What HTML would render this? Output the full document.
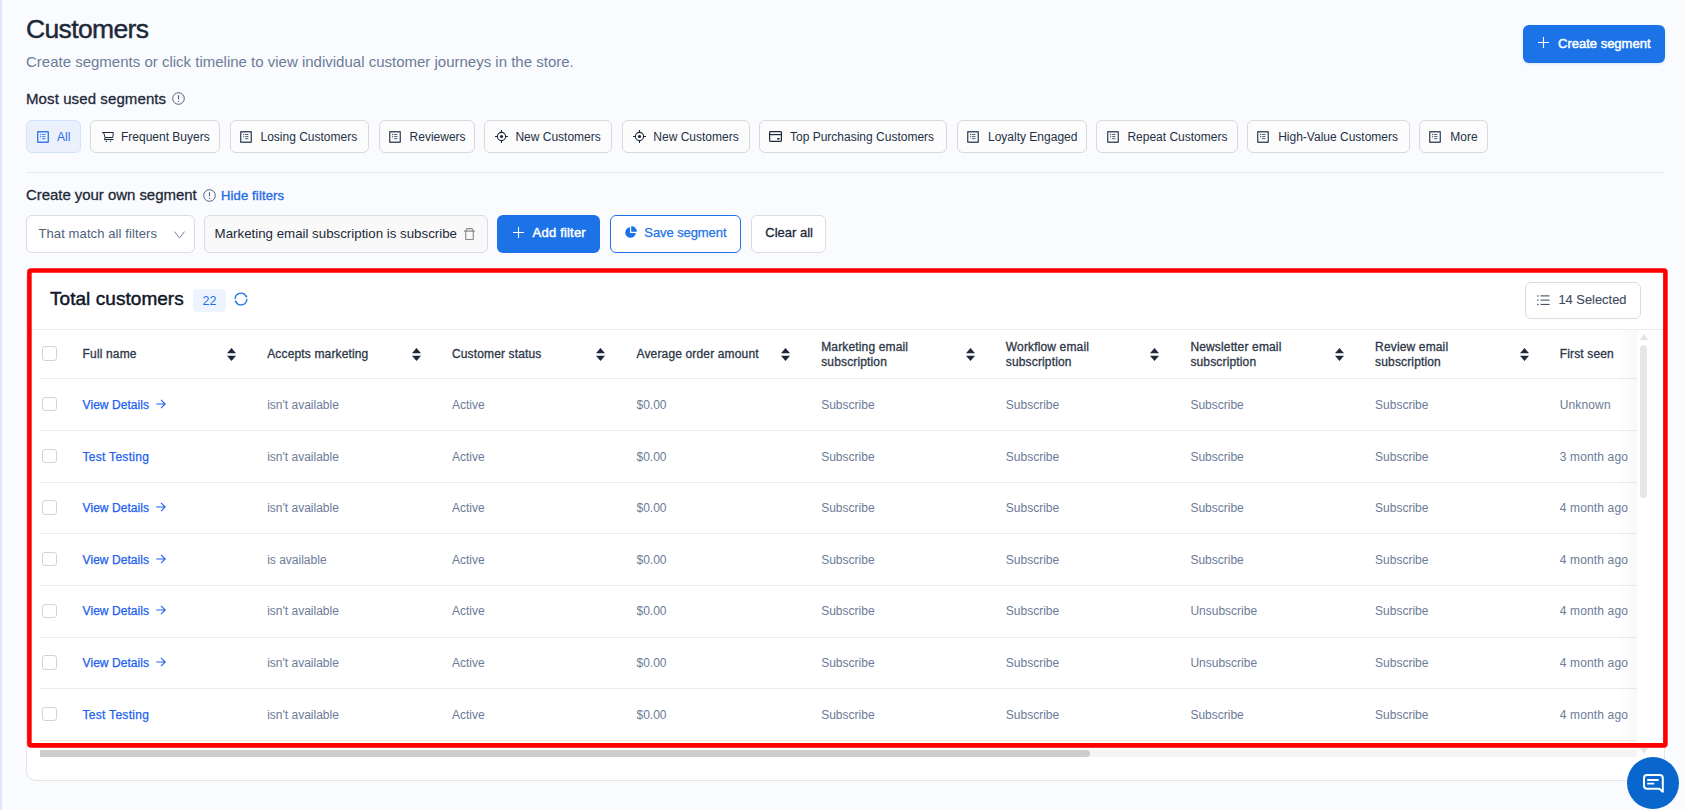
<!DOCTYPE html>
<html><head><meta charset="utf-8"><title>Customers</title>
<style>
html,body{margin:0;padding:0;}
body{width:1685px;height:810px;overflow:hidden;position:relative;background:#fafbfe;font-family:"Liberation Sans", sans-serif;}
.abs{position:absolute;white-space:nowrap;}
svg{display:block;}
.lb{position:absolute;left:0;top:0;width:2px;height:810px;background:#e3e6fa;}
.btn-blue{background:#1c73e8;}
.chip{border:1px solid #d8d9de;border-radius:6px;box-sizing:border-box;background:#fcfcfd;}
.chip.active{background:#eaf1fd;border-color:#d3e2fb;}
.chiptxt{top:1px;line-height:31px;font-size:12px;letter-spacing:0px;color:#243044;}
.chip.active .chiptxt{color:#2a6be8;}
.field{border:1px solid #dcdcdf;border-radius:6px;box-sizing:border-box;}
.th{font-size:12px;color:#2d3748;letter-spacing:0.15px;-webkit-text-stroke:0.3px #2d3748;line-height:15px;}
.td{font-size:12px;color:#6b7b98;line-height:20px;}
.link{font-size:12px;color:#2160f0;-webkit-text-stroke:0.25px #2160f0;letter-spacing:0.05px}
.cb{width:14.4px;height:14.4px;border:1px solid #d0d5dd;border-radius:3px;box-sizing:border-box;background:#fff;}
</style></head>
<body>
<div class="lb"></div>
<div class="abs" style="left:26px;top:13px;font-size:26.5px;color:#1d2939;letter-spacing:-0.65px;-webkit-text-stroke:0.45px #1d2939;line-height:32px">Customers</div>
<div class="abs" style="left:26px;top:52px;font-size:15px;color:#6b7b98;line-height:20px">Create segments or click timeline to view individual customer journeys in the store.</div>
<div class="abs btn-blue" style="left:1523px;top:25px;width:142px;height:38px;border-radius:6px;box-shadow:0 1px 3px rgba(28,115,232,0.18)"><span class="abs" style="left:15px;top:12px"><svg width="11" height="11" viewBox="0 0 11 11"><path d="M5.5 0V11M0 5.5H11" stroke="#fff" stroke-width="1.1"/></svg></span><span class="abs" style="left:35px;top:0;line-height:38px;font-size:13px;color:#fff;-webkit-text-stroke:0.45px #fff">Create segment</span></div>
<div class="abs" style="left:26px;top:89px;font-size:15px;color:#1d2939;letter-spacing:0.1px;-webkit-text-stroke:0.3px #1d2939;line-height:20px">Most used segments</div>
<div class="abs" style="left:172px;top:92px"><svg width="13" height="13" viewBox="0 0 13 13"><circle cx="6.5" cy="6.5" r="5.8" fill="none" stroke="#52627e" stroke-width="1"/><path d="M6.5 3.2V7.4" stroke="#52627e" stroke-width="1.1"/><circle cx="6.5" cy="9.3" r="0.65" fill="#52627e"/></svg></div>
<div class="abs chip active" style="left:26px;top:120px;width:55.3px;height:33px"><span class="abs" style="left:9.9px;top:10px;line-height:0"><svg width="12" height="12" viewBox="0 0 12 12"><rect x="0.7" y="0.7" width="10.6" height="10.6" rx="0.35" fill="none" stroke="#3b7be9" stroke-width="1.4"/><circle cx="3.6" cy="3.5" r="0.65" fill="#3b7be9"/><circle cx="3.6" cy="5.6" r="0.65" fill="#3b7be9"/><circle cx="3.6" cy="7.7" r="0.5" fill="#3b7be9" opacity=".35"/><path d="M5.1 3.5H8.4M5.1 5.6H8.4M5.1 7.7H8.4" stroke="#3b7be9" stroke-width="0.95"/></svg></span><span class="abs chiptxt" style="left:30px">All</span></div>
<div class="abs chip" style="left:90px;top:120px;width:130.3px;height:33px"><span class="abs" style="left:11px;top:10px;line-height:0"><svg width="12" height="12" viewBox="0 0 12 12"><path d="M0 1.5H1.6L3.1 6.5H10.8L11.3 1.5H1.7" fill="none" stroke="#1d2939" stroke-width="1" stroke-linejoin="round"/><path d="M3.1 6.5L2.5 8.5" fill="none" stroke="#1d2939" stroke-width="1"/><path d="M2.2 8.5H11.5" stroke="#1d2939" stroke-width="1.1"/><circle cx="4.4" cy="10.3" r="0.75" fill="#1d2939"/><circle cx="8.6" cy="10.3" r="0.75" fill="#1d2939" opacity=".7"/></svg></span><span class="abs chiptxt" style="left:30px">Frequent Buyers</span></div>
<div class="abs chip" style="left:229.5px;top:120px;width:139.4px;height:33px"><span class="abs" style="left:9.2px;top:10px;line-height:0"><svg width="12" height="12" viewBox="0 0 12 12"><rect x="0.7" y="0.7" width="10.6" height="10.6" rx="0.35" fill="none" stroke="#475467" stroke-width="1.4"/><circle cx="3.6" cy="3.5" r="0.65" fill="#475467"/><circle cx="3.6" cy="5.6" r="0.65" fill="#475467"/><circle cx="3.6" cy="7.7" r="0.5" fill="#475467" opacity=".35"/><path d="M5.1 3.5H8.4M5.1 5.6H8.4M5.1 7.7H8.4" stroke="#475467" stroke-width="0.95"/></svg></span><span class="abs chiptxt" style="left:30px">Losing Customers</span></div>
<div class="abs chip" style="left:378.6px;top:120px;width:96.2px;height:33px"><span class="abs" style="left:9.2px;top:10px;line-height:0"><svg width="12" height="12" viewBox="0 0 12 12"><rect x="0.7" y="0.7" width="10.6" height="10.6" rx="0.35" fill="none" stroke="#475467" stroke-width="1.4"/><circle cx="3.6" cy="3.5" r="0.65" fill="#475467"/><circle cx="3.6" cy="5.6" r="0.65" fill="#475467"/><circle cx="3.6" cy="7.7" r="0.5" fill="#475467" opacity=".35"/><path d="M5.1 3.5H8.4M5.1 5.6H8.4M5.1 7.7H8.4" stroke="#475467" stroke-width="0.95"/></svg></span><span class="abs chiptxt" style="left:30px">Reviewers</span></div>
<div class="abs chip" style="left:484.4px;top:120px;width:127.6px;height:33px"><span class="abs" style="left:9.6px;top:9px;line-height:0"><svg width="13" height="13" viewBox="0 0 13 13"><circle cx="6.5" cy="6.5" r="4.1" fill="none" stroke="#1d2939" stroke-width="1.1"/><circle cx="6.5" cy="6.5" r="1.6" fill="#1d2939"/><path d="M6.5 0V2.4M6.5 10.6V13M0 6.5H2.4M10.6 6.5H13" stroke="#1d2939" stroke-width="1.1"/></svg></span><span class="abs chiptxt" style="left:30px">New Customers</span></div>
<div class="abs chip" style="left:622.3px;top:120px;width:127.6px;height:33px"><span class="abs" style="left:9.6px;top:9px;line-height:0"><svg width="13" height="13" viewBox="0 0 13 13"><circle cx="6.5" cy="6.5" r="4.1" fill="none" stroke="#1d2939" stroke-width="1.1"/><circle cx="6.5" cy="6.5" r="1.6" fill="#1d2939"/><path d="M6.5 0V2.4M6.5 10.6V13M0 6.5H2.4M10.6 6.5H13" stroke="#1d2939" stroke-width="1.1"/></svg></span><span class="abs chiptxt" style="left:30px">New Customers</span></div>
<div class="abs chip" style="left:759px;top:120px;width:187.9px;height:33px"><span class="abs" style="left:9.1px;top:10px;line-height:0"><svg width="13" height="11" viewBox="0 0 13 11"><rect x="0.6" y="0.6" width="11.8" height="9.8" rx="0.8" fill="none" stroke="#1d2939" stroke-width="1.2"/><path d="M0.6 3.6H12.4" stroke="#1d2939" stroke-width="1.2"/><rect x="8.2" y="7" width="2.4" height="1.6" fill="#1d2939"/></svg></span><span class="abs chiptxt" style="left:30px">Top Purchasing Customers</span></div>
<div class="abs chip" style="left:957px;top:120px;width:129.9px;height:33px"><span class="abs" style="left:9.2px;top:10px;line-height:0"><svg width="12" height="12" viewBox="0 0 12 12"><rect x="0.7" y="0.7" width="10.6" height="10.6" rx="0.35" fill="none" stroke="#475467" stroke-width="1.4"/><circle cx="3.6" cy="3.5" r="0.65" fill="#475467"/><circle cx="3.6" cy="5.6" r="0.65" fill="#475467"/><circle cx="3.6" cy="7.7" r="0.5" fill="#475467" opacity=".35"/><path d="M5.1 3.5H8.4M5.1 5.6H8.4M5.1 7.7H8.4" stroke="#475467" stroke-width="0.95"/></svg></span><span class="abs chiptxt" style="left:30px">Loyalty Engaged</span></div>
<div class="abs chip" style="left:1096.4px;top:120px;width:141.3px;height:33px"><span class="abs" style="left:9.2px;top:10px;line-height:0"><svg width="12" height="12" viewBox="0 0 12 12"><rect x="0.7" y="0.7" width="10.6" height="10.6" rx="0.35" fill="none" stroke="#475467" stroke-width="1.4"/><circle cx="3.6" cy="3.5" r="0.65" fill="#475467"/><circle cx="3.6" cy="5.6" r="0.65" fill="#475467"/><circle cx="3.6" cy="7.7" r="0.5" fill="#475467" opacity=".35"/><path d="M5.1 3.5H8.4M5.1 5.6H8.4M5.1 7.7H8.4" stroke="#475467" stroke-width="0.95"/></svg></span><span class="abs chiptxt" style="left:30px">Repeat Customers</span></div>
<div class="abs chip" style="left:1247.2px;top:120px;width:162.6px;height:33px"><span class="abs" style="left:9.2px;top:10px;line-height:0"><svg width="12" height="12" viewBox="0 0 12 12"><rect x="0.7" y="0.7" width="10.6" height="10.6" rx="0.35" fill="none" stroke="#475467" stroke-width="1.4"/><circle cx="3.6" cy="3.5" r="0.65" fill="#475467"/><circle cx="3.6" cy="5.6" r="0.65" fill="#475467"/><circle cx="3.6" cy="7.7" r="0.5" fill="#475467" opacity=".35"/><path d="M5.1 3.5H8.4M5.1 5.6H8.4M5.1 7.7H8.4" stroke="#475467" stroke-width="0.95"/></svg></span><span class="abs chiptxt" style="left:30px">High-Value Customers</span></div>
<div class="abs chip" style="left:1419.3px;top:120px;width:68.5px;height:33px"><span class="abs" style="left:9.2px;top:10px;line-height:0"><svg width="12" height="12" viewBox="0 0 12 12"><rect x="0.7" y="0.7" width="10.6" height="10.6" rx="0.35" fill="none" stroke="#475467" stroke-width="1.4"/><circle cx="3.6" cy="3.5" r="0.65" fill="#475467"/><circle cx="3.6" cy="5.6" r="0.65" fill="#475467"/><circle cx="3.6" cy="7.7" r="0.5" fill="#475467" opacity=".35"/><path d="M5.1 3.5H8.4M5.1 5.6H8.4M5.1 7.7H8.4" stroke="#475467" stroke-width="0.95"/></svg></span><span class="abs chiptxt" style="left:30px">More</span></div>
<div class="abs" style="left:26px;top:172px;width:1639px;height:1px;background:#e9e9eb"></div>
<div class="abs" style="left:26px;top:185px;font-size:15px;color:#1d2939;letter-spacing:-0.05px;-webkit-text-stroke:0.3px #1d2939;line-height:20px">Create your own segment</div>
<div class="abs" style="left:203px;top:189px"><svg width="13" height="13" viewBox="0 0 13 13"><circle cx="6.5" cy="6.5" r="5.8" fill="none" stroke="#52627e" stroke-width="1"/><path d="M6.5 3.2V7.4" stroke="#52627e" stroke-width="1.1"/><circle cx="6.5" cy="9.3" r="0.65" fill="#52627e"/></svg></div>
<div class="abs" style="left:221px;top:186px;font-size:13px;color:#1f6ae6;letter-spacing:0.15px;-webkit-text-stroke:0.35px #1f6ae6;line-height:20px">Hide filters</div>
<div class="abs field" style="left:26px;top:215px;width:169px;height:38px;background:#fff"><span class="abs" style="left:11.5px;top:-1px;line-height:37px;font-size:13px;letter-spacing:0.1px;color:#4f5f7c">That match all filters</span><span class="abs" style="left:146.8px;top:14.5px;line-height:0"><svg width="11" height="8" viewBox="0 0 11 8"><path d="M0.5 0.6L5.5 7L10.5 0.6" fill="none" stroke="#6b7a99" stroke-width="0.95"/></svg></span></div>
<div class="abs field" style="left:204.4px;top:215px;width:283.3px;height:37.5px;background:#f9f9f9"><span class="abs" style="left:9.2px;top:-0.4px;line-height:36px;font-size:13.3px;color:#1d2939">Marketing email subscription is subscribe</span><span class="abs" style="left:258.6px;top:11.5px;line-height:0"><svg width="11" height="12" viewBox="0 0 11 12"><path d="M2.4 2.9V1.7Q2.4 0.6 3.4 0.6H7.6Q8.6 0.6 8.6 1.7V2.9M0 3.1H11M1.7 3.1V11Q1.7 11.5 2.3 11.5H8.7Q9.3 11.5 9.3 11V3.1" fill="none" stroke="#8a8a8a" stroke-width="1.1"/></svg></span></div>
<div class="abs btn-blue" style="left:497.3px;top:215px;width:102.4px;height:38px;border-radius:6px"><span class="abs" style="left:15.5px;top:11.6px"><svg width="11" height="11" viewBox="0 0 11 11"><path d="M5.5 0V11M0 5.5H11" stroke="#fff" stroke-width="1.1"/></svg></span><span class="abs" style="left:35.3px;top:0;line-height:36px;font-size:13px;letter-spacing:0.2px;color:#fff;-webkit-text-stroke:0.45px #fff">Add filter</span></div>
<div class="abs" style="left:610px;top:215px;width:131px;height:38px;border-radius:6px;border:1px solid #1c73e8;box-sizing:border-box;background:#fff"><span class="abs" style="left:12.6px;top:9.6px;line-height:0"><svg width="13" height="13" viewBox="0 0 13 13"><path d="M6 1.2A5.3 5.3 0 1 0 11.8 7H6Z" fill="#1c73e8"/><path d="M7.2 0A5.8 5.8 0 0 1 13 5.8H7.2Z" fill="#1c73e8"/></svg></span><span class="abs" style="left:33.3px;top:-1px;line-height:36px;font-size:13px;letter-spacing:-0.08px;color:#1c73e8;-webkit-text-stroke:0.25px #1c73e8">Save segment</span></div>
<div class="abs field" style="left:751.3px;top:215px;width:75.2px;height:38px;background:#fff"><span class="abs" style="left:13px;top:-1px;line-height:36px;font-size:13px;color:#1d2939;-webkit-text-stroke:0.3px #1d2939">Clear all</span></div>
<div class="abs" style="left:25.9px;top:268.5px;width:1639px;height:512.4px;background:#fff;border:1px solid #e6e4e4;border-radius:10px;box-sizing:border-box"></div>
<div class="abs" style="left:50px;top:287px;font-size:19px;color:#101828;letter-spacing:0.05px;-webkit-text-stroke:0.45px #101828;line-height:24px">Total customers</div>
<div class="abs" style="left:193px;top:289px;width:33px;height:22.5px;background:#eef4fe;border-radius:4px;text-align:center;line-height:25px;font-size:12.5px;color:#1c73e8">22</div>
<div class="abs" style="left:233.6px;top:292.4px;line-height:0"><svg width="14" height="14" viewBox="0 0 14 14" overflow="visible"><path d="M1.1 7A5.9 5.9 0 0 1 12.16 4.14M12.9 7A5.9 5.9 0 0 1 1.84 9.86" fill="none" stroke="#1c73e8" stroke-width="1.3"/><path d="M12.98 5.63L13.47 3.41L10.85 4.87Z" fill="#1c73e8"/><path d="M1.02 8.37L0.53 10.59L3.15 9.13Z" fill="#1c73e8"/></svg></div>
<div class="abs field" style="left:1525.4px;top:282px;width:115.2px;height:37px;background:#fff"><span class="abs" style="left:10.8px;top:12.2px;line-height:0"><svg width="13" height="11" viewBox="0 0 13 11"><path d="M3.6 0.9H12.6M3.6 5.1H12.6M3.6 9.4H12.6" stroke="#344054" stroke-width="1"/><circle cx="0.9" cy="0.9" r="0.75" fill="#344054"/><circle cx="0.9" cy="5.1" r="0.75" fill="#344054"/><circle cx="0.9" cy="9.4" r="0.75" fill="#344054"/></svg></span><span class="abs" style="left:32px;top:-1.3px;line-height:35px;font-size:12.9px;color:#3f4b5e;-webkit-text-stroke:0.12px #3f4b5e">14 Selected</span></div>
<div class="abs" style="left:27px;top:329px;width:1637px;height:1px;background:#ececec"></div>
<div class="abs th" style="left:82.6px;top:347px">Full name</div>
<div class="abs" style="left:227.0px;top:348px;line-height:0"><svg width="9" height="13" viewBox="0 0 9 13"><path d="M4.5 0L9 5.2H0Z" fill="#1d2939"/><path d="M4.5 13L9 7.8H0Z" fill="#1d2939"/></svg></div>
<div class="abs th" style="left:267.2px;top:347px">Accepts marketing</div>
<div class="abs" style="left:411.6px;top:348px;line-height:0"><svg width="9" height="13" viewBox="0 0 9 13"><path d="M4.5 0L9 5.2H0Z" fill="#1d2939"/><path d="M4.5 13L9 7.8H0Z" fill="#1d2939"/></svg></div>
<div class="abs th" style="left:451.9px;top:347px">Customer status</div>
<div class="abs" style="left:596.3px;top:348px;line-height:0"><svg width="9" height="13" viewBox="0 0 9 13"><path d="M4.5 0L9 5.2H0Z" fill="#1d2939"/><path d="M4.5 13L9 7.8H0Z" fill="#1d2939"/></svg></div>
<div class="abs th" style="left:636.5px;top:347px">Average order amount</div>
<div class="abs" style="left:780.9px;top:348px;line-height:0"><svg width="9" height="13" viewBox="0 0 9 13"><path d="M4.5 0L9 5.2H0Z" fill="#1d2939"/><path d="M4.5 13L9 7.8H0Z" fill="#1d2939"/></svg></div>
<div class="abs th" style="left:821.2px;top:340px">Marketing email</div>
<div class="abs th" style="left:821.2px;top:355px">subscription</div>
<div class="abs" style="left:965.6px;top:348px;line-height:0"><svg width="9" height="13" viewBox="0 0 9 13"><path d="M4.5 0L9 5.2H0Z" fill="#1d2939"/><path d="M4.5 13L9 7.8H0Z" fill="#1d2939"/></svg></div>
<div class="abs th" style="left:1005.8px;top:340px">Workflow email</div>
<div class="abs th" style="left:1005.8px;top:355px">subscription</div>
<div class="abs" style="left:1150.2px;top:348px;line-height:0"><svg width="9" height="13" viewBox="0 0 9 13"><path d="M4.5 0L9 5.2H0Z" fill="#1d2939"/><path d="M4.5 13L9 7.8H0Z" fill="#1d2939"/></svg></div>
<div class="abs th" style="left:1190.4px;top:340px">Newsletter email</div>
<div class="abs th" style="left:1190.4px;top:355px">subscription</div>
<div class="abs" style="left:1334.8px;top:348px;line-height:0"><svg width="9" height="13" viewBox="0 0 9 13"><path d="M4.5 0L9 5.2H0Z" fill="#1d2939"/><path d="M4.5 13L9 7.8H0Z" fill="#1d2939"/></svg></div>
<div class="abs th" style="left:1375.1px;top:340px">Review email</div>
<div class="abs th" style="left:1375.1px;top:355px">subscription</div>
<div class="abs" style="left:1519.5px;top:348px;line-height:0"><svg width="9" height="13" viewBox="0 0 9 13"><path d="M4.5 0L9 5.2H0Z" fill="#1d2939"/><path d="M4.5 13L9 7.8H0Z" fill="#1d2939"/></svg></div>
<div class="abs th" style="left:1559.7px;top:347px">First seen</div>
<div class="abs cb" style="left:42.3px;top:346.3px"></div>
<div class="abs" style="left:40px;top:378.1px;width:1597px;height:1px;background:#ebebeb"></div>
<div class="abs cb" style="left:42.3px;top:396.8px"></div>
<div class="abs td link" style="left:82.6px;top:394.95px;">View Details</div>
<div class="abs" style="left:155.5px;top:398.95px;line-height:0"><svg width="10" height="10" viewBox="0 0 10 10"><path d="M0.3 5H9.2M5 0.8L9.2 5L5 9.2" fill="none" stroke="#2160f0" stroke-width="1.1"/></svg></div>
<div class="abs td" style="left:267.2px;top:394.95px;">isn't available</div>
<div class="abs td" style="left:451.9px;top:394.95px;">Active</div>
<div class="abs td" style="left:636.5px;top:394.95px;">$0.00</div>
<div class="abs td" style="left:821.2px;top:394.95px;">Subscribe</div>
<div class="abs td" style="left:1005.8px;top:394.95px;">Subscribe</div>
<div class="abs td" style="left:1190.4px;top:394.95px;">Subscribe</div>
<div class="abs td" style="left:1375.1px;top:394.95px;">Subscribe</div>
<div class="abs td" style="left:1559.7px;top:394.95px;letter-spacing:0.15px;">Unknown</div>
<div class="abs" style="left:40px;top:429.8px;width:1597px;height:1px;background:#ebebeb"></div>
<div class="abs cb" style="left:42.3px;top:448.5px"></div>
<div class="abs td link" style="left:82.6px;top:446.55px;letter-spacing:0.28px;">Test Testing</div>
<div class="abs td" style="left:267.2px;top:446.55px;">isn't available</div>
<div class="abs td" style="left:451.9px;top:446.55px;">Active</div>
<div class="abs td" style="left:636.5px;top:446.55px;">$0.00</div>
<div class="abs td" style="left:821.2px;top:446.55px;">Subscribe</div>
<div class="abs td" style="left:1005.8px;top:446.55px;">Subscribe</div>
<div class="abs td" style="left:1190.4px;top:446.55px;">Subscribe</div>
<div class="abs td" style="left:1375.1px;top:446.55px;">Subscribe</div>
<div class="abs td" style="left:1559.7px;top:446.55px;letter-spacing:0.15px;">3 month ago</div>
<div class="abs" style="left:40px;top:481.5px;width:1597px;height:1px;background:#ebebeb"></div>
<div class="abs cb" style="left:42.3px;top:500.2px"></div>
<div class="abs td link" style="left:82.6px;top:498.15px;">View Details</div>
<div class="abs" style="left:155.5px;top:502.15px;line-height:0"><svg width="10" height="10" viewBox="0 0 10 10"><path d="M0.3 5H9.2M5 0.8L9.2 5L5 9.2" fill="none" stroke="#2160f0" stroke-width="1.1"/></svg></div>
<div class="abs td" style="left:267.2px;top:498.15px;">isn't available</div>
<div class="abs td" style="left:451.9px;top:498.15px;">Active</div>
<div class="abs td" style="left:636.5px;top:498.15px;">$0.00</div>
<div class="abs td" style="left:821.2px;top:498.15px;">Subscribe</div>
<div class="abs td" style="left:1005.8px;top:498.15px;">Subscribe</div>
<div class="abs td" style="left:1190.4px;top:498.15px;">Subscribe</div>
<div class="abs td" style="left:1375.1px;top:498.15px;">Subscribe</div>
<div class="abs td" style="left:1559.7px;top:498.15px;letter-spacing:0.15px;">4 month ago</div>
<div class="abs" style="left:40px;top:533.2px;width:1597px;height:1px;background:#ebebeb"></div>
<div class="abs cb" style="left:42.3px;top:551.9px"></div>
<div class="abs td link" style="left:82.6px;top:549.75px;">View Details</div>
<div class="abs" style="left:155.5px;top:553.75px;line-height:0"><svg width="10" height="10" viewBox="0 0 10 10"><path d="M0.3 5H9.2M5 0.8L9.2 5L5 9.2" fill="none" stroke="#2160f0" stroke-width="1.1"/></svg></div>
<div class="abs td" style="left:267.2px;top:549.75px;">is available</div>
<div class="abs td" style="left:451.9px;top:549.75px;">Active</div>
<div class="abs td" style="left:636.5px;top:549.75px;">$0.00</div>
<div class="abs td" style="left:821.2px;top:549.75px;">Subscribe</div>
<div class="abs td" style="left:1005.8px;top:549.75px;">Subscribe</div>
<div class="abs td" style="left:1190.4px;top:549.75px;">Subscribe</div>
<div class="abs td" style="left:1375.1px;top:549.75px;">Subscribe</div>
<div class="abs td" style="left:1559.7px;top:549.75px;letter-spacing:0.15px;">4 month ago</div>
<div class="abs" style="left:40px;top:584.9px;width:1597px;height:1px;background:#ebebeb"></div>
<div class="abs cb" style="left:42.3px;top:603.6px"></div>
<div class="abs td link" style="left:82.6px;top:601.35px;">View Details</div>
<div class="abs" style="left:155.5px;top:605.35px;line-height:0"><svg width="10" height="10" viewBox="0 0 10 10"><path d="M0.3 5H9.2M5 0.8L9.2 5L5 9.2" fill="none" stroke="#2160f0" stroke-width="1.1"/></svg></div>
<div class="abs td" style="left:267.2px;top:601.35px;">isn't available</div>
<div class="abs td" style="left:451.9px;top:601.35px;">Active</div>
<div class="abs td" style="left:636.5px;top:601.35px;">$0.00</div>
<div class="abs td" style="left:821.2px;top:601.35px;">Subscribe</div>
<div class="abs td" style="left:1005.8px;top:601.35px;">Subscribe</div>
<div class="abs td" style="left:1190.4px;top:601.35px;">Unsubscribe</div>
<div class="abs td" style="left:1375.1px;top:601.35px;">Subscribe</div>
<div class="abs td" style="left:1559.7px;top:601.35px;letter-spacing:0.15px;">4 month ago</div>
<div class="abs" style="left:40px;top:636.6px;width:1597px;height:1px;background:#ebebeb"></div>
<div class="abs cb" style="left:42.3px;top:655.2px"></div>
<div class="abs td link" style="left:82.6px;top:652.95px;">View Details</div>
<div class="abs" style="left:155.5px;top:656.95px;line-height:0"><svg width="10" height="10" viewBox="0 0 10 10"><path d="M0.3 5H9.2M5 0.8L9.2 5L5 9.2" fill="none" stroke="#2160f0" stroke-width="1.1"/></svg></div>
<div class="abs td" style="left:267.2px;top:652.95px;">isn't available</div>
<div class="abs td" style="left:451.9px;top:652.95px;">Active</div>
<div class="abs td" style="left:636.5px;top:652.95px;">$0.00</div>
<div class="abs td" style="left:821.2px;top:652.95px;">Subscribe</div>
<div class="abs td" style="left:1005.8px;top:652.95px;">Subscribe</div>
<div class="abs td" style="left:1190.4px;top:652.95px;">Unsubscribe</div>
<div class="abs td" style="left:1375.1px;top:652.95px;">Subscribe</div>
<div class="abs td" style="left:1559.7px;top:652.95px;letter-spacing:0.15px;">4 month ago</div>
<div class="abs" style="left:40px;top:688.3px;width:1597px;height:1px;background:#ebebeb"></div>
<div class="abs cb" style="left:42.3px;top:707.0px"></div>
<div class="abs td link" style="left:82.6px;top:704.55px;letter-spacing:0.28px;">Test Testing</div>
<div class="abs td" style="left:267.2px;top:704.55px;">isn't available</div>
<div class="abs td" style="left:451.9px;top:704.55px;">Active</div>
<div class="abs td" style="left:636.5px;top:704.55px;">$0.00</div>
<div class="abs td" style="left:821.2px;top:704.55px;">Subscribe</div>
<div class="abs td" style="left:1005.8px;top:704.55px;">Subscribe</div>
<div class="abs td" style="left:1190.4px;top:704.55px;">Subscribe</div>
<div class="abs td" style="left:1375.1px;top:704.55px;">Subscribe</div>
<div class="abs td" style="left:1559.7px;top:704.55px;letter-spacing:0.15px;">4 month ago</div>
<div class="abs" style="left:40px;top:740.0px;width:1597px;height:1px;background:#ebebeb"></div>
<div class="abs" style="left:1617px;top:330px;width:20px;height:417px;background:linear-gradient(to right, rgba(0,0,0,0), rgba(0,0,0,0.025))"></div>
<div class="abs" style="left:1637px;top:330px;width:13px;height:427px;background:#fff"></div>
<div class="abs" style="left:1640px;top:333.5px;line-height:0"><svg width="8" height="6" viewBox="0 0 8 6"><path d="M4 0L8 6H0Z" fill="#e3e3e3"/></svg></div>
<div class="abs" style="left:1640.2px;top:344.7px;width:6.8px;height:153.6px;background:#e6e6e6;border-radius:4px"></div>
<div class="abs" style="left:1640px;top:748px;line-height:0"><svg width="8" height="6" viewBox="0 0 8 6"><path d="M4 6L8 0H0Z" fill="#e3e3e3"/></svg></div>
<div class="abs" style="left:40px;top:750px;width:1597px;height:7px;background:#f4f4f4"></div>
<div class="abs" style="left:40px;top:750px;width:1050px;height:7px;background:#cccccc;border-radius:0 3.5px 3.5px 0"></div>
<svg class="abs" style="left:0;top:0" width="1685" height="810" viewBox="0 0 1685 810"><rect x="29.4" y="270.5" width="1636" height="474.9" rx="1.4" fill="none" stroke="#ff0000" stroke-width="4.6"/></svg>
<div class="abs" style="left:1627px;top:757px;width:52px;height:52px;border-radius:50%;background:#0866cc"></div>
<div class="abs" style="left:1643px;top:774px;line-height:0"><svg width="21" height="19" viewBox="0 0 21 19"><path d="M4 1H16.5Q19.8 1 19.8 4.2V17.8L16.2 14.8H4Q1 14.8 1 11.8V4Q1 1 4 1Z" fill="none" stroke="#fff" stroke-width="2" stroke-linejoin="round"/><path d="M4.2 6H15.6M4.2 9.6H11.2" stroke="#fff" stroke-width="1.8"/></svg></div>
</body></html>
